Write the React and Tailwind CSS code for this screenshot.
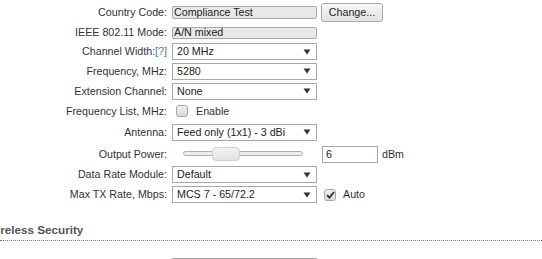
import React from "react";

function Arrow() {
  return (
    <svg width="8" height="6" viewBox="0 0 8 6" className="shrink-0">
      <path d="M0.5 0.5 H7.5 L4 5.5 Z" fill="#333" />
    </svg>
  );
}

function Select({ value }) {
  return (
    <div className="w-[145px] h-[17px] border border-[#a9a9a9] bg-white flex items-center justify-between pl-[4px] pr-[5px] text-[#222]">
      <span className="leading-none whitespace-nowrap">{value}</span>
      <Arrow />
    </div>
  );
}

function Row({ label, h, children }) {
  return (
    <div className={`flex items-center ${h}`}>
      <div className="w-[167px] shrink-0 text-right whitespace-nowrap">{label}</div>
      <div className="ml-[5px] flex items-center">{children}</div>
    </div>
  );
}

function Checkbox({ checked }) {
  return (
    <div className="w-[12px] h-[12px] rounded-[3px] border border-[#a6a6a6] bg-gradient-to-b from-[#f0f0f0] to-[#d9d9d9] flex items-center justify-center">
      {checked && (
        <svg width="9" height="8" viewBox="0 0 9 8">
          <path d="M1 4.2 L3.4 6.6 L8 1" fill="none" stroke="#333" strokeWidth="1.9" />
        </svg>
      )}
    </div>
  );
}

export default function App() {
  return (
    <div className="w-[542px] h-[259px] overflow-hidden bg-white font-['Liberation_Sans',Arial,sans-serif] text-[10.7px] text-[#333]">
      <div className="pt-[2px]">
        <Row label="Country Code:" h="h-[21px]">
          <div className="w-[145px] h-[13px] rounded-[2px] border border-[#a9a9a9] bg-[#e8e8e8] flex items-center pl-[1px] text-[#222] leading-none whitespace-nowrap">
            Compliance Test
          </div>
          <div className="ml-[4px] w-[62px] h-[19px] rounded-[3px] border border-[#aaaaaa] bg-gradient-to-b from-[#f7f7f7] to-[#e2e2e2] flex items-center justify-center text-[#222] leading-none">
            Change...
          </div>
        </Row>
        <Row label="IEEE 802.11 Mode:" h="h-[19px]">
          <div className="w-[145px] h-[12px] rounded-[2px] border border-[#a9a9a9] bg-[#e8e8e8] flex items-center pl-[1px] text-[#222] leading-none whitespace-nowrap">
            A/N mixed
          </div>
        </Row>
        <Row
          label={
            <span>
              Channel Width:<span className="text-[#3a78c3]">[?]</span>
            </span>
          }
          h="h-[19px]"
        >
          <Select value="20 MHz" />
        </Row>
        <Row label="Frequency, MHz:" h="h-[20px]">
          <Select value="5280" />
        </Row>
        <Row label="Extension Channel:" h="h-[20px]">
          <Select value="None" />
        </Row>
        <Row label="Frequency List, MHz:" h="h-[20px]">
          <div className="ml-[4px]">
            <Checkbox />
          </div>
          <span className="ml-[8px] text-[#333] leading-none">Enable</span>
        </Row>
        <Row label="Antenna:" h="h-[22px]">
          <Select value="Feed only (1x1) - 3 dBi" />
        </Row>
        <Row label="Output Power:" h="h-[22px]">
          <div className="relative w-[145px] h-[14px]">
            <div className="absolute left-[11px] top-[4px] w-[120px] h-[5px] rounded-full border border-[#b0b0b0] bg-[#ececec]" />
            <div className="absolute left-[40px] top-0 w-[28px] h-[14px] rounded-[4px] border border-[#cfcfcf] bg-gradient-to-b from-[#f2f2f2] to-[#e2e2e2]" />
          </div>
          <div className="ml-[5px] w-[56px] h-[17px] border border-[#a9a9a9] bg-white flex items-center pl-[3px] text-[#222] leading-none">
            6
          </div>
          <span className="ml-[4px] leading-none">dBm</span>
        </Row>
        <Row label="Data Rate Module:" h="h-[19px]">
          <Select value="Default" />
        </Row>
        <Row label="Max TX Rate, Mbps:" h="h-[21px]">
          <Select value="MCS 7 - 65/72.2" />
          <div className="ml-[7px]">
            <Checkbox checked />
          </div>
          <span className="ml-[7px] leading-none">Auto</span>
        </Row>
      </div>
      <div className="mt-[19px] border-b border-dotted border-[#7a7a7a] pb-[4px]">
        <div className="ml-[-14px] font-bold text-[11.7px] text-[#555] leading-[12px] whitespace-nowrap">
          Wireless Security
        </div>
      </div>
      <div className="mt-[17px] ml-[172px] w-[145px] h-[17px] border border-[#a9a9a9] bg-white" />
    </div>
  );
}
